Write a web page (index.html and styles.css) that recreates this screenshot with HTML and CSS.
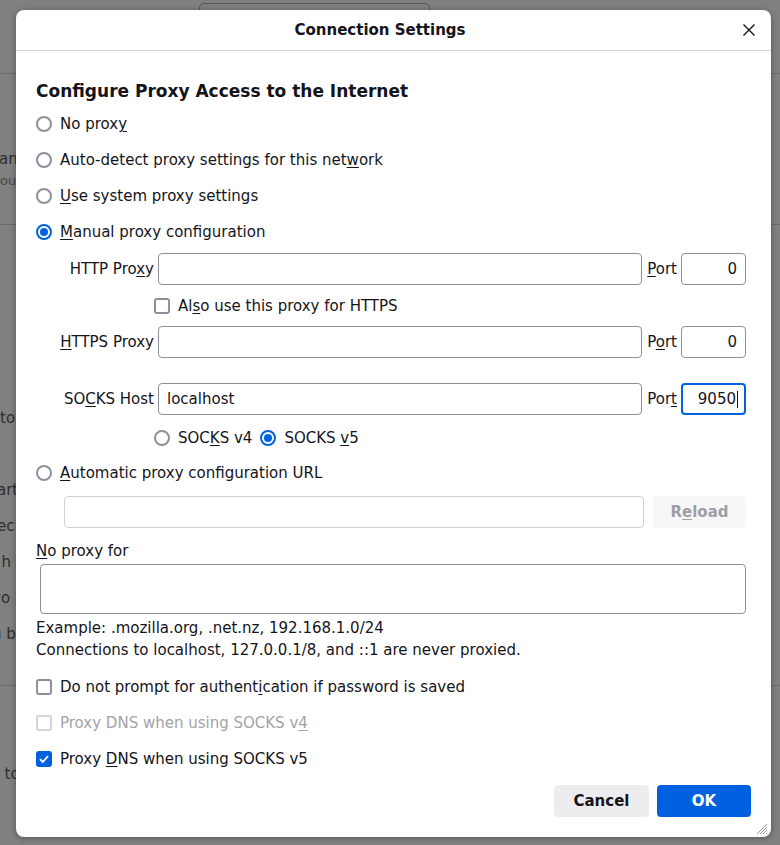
FILE: index.html
```html
<!DOCTYPE html>
<html>
<head>
<meta charset="utf-8">
<link rel="stylesheet" href="styles.css">
</head>
<body>
<div class="backdrop">
  <div class="bd-box"></div>
  <div class="bd-line bd-l1"></div>
  <div class="bd-text bd-t1">an</div>
  <div class="bd-text bd-small">ou</div>
  <div class="bd-line bd-l2"></div>
  <div class="bd-text bd-t3">to</div>
  <div class="bd-text bd-t4">art</div>
  <div class="bd-text bd-t5">ec</div>
  <div class="bd-text bd-t5">. h</div>
  <div class="bd-text bd-t5">yo</div>
  <div class="bd-text bd-t5">u b</div>
  <div class="bd-line bd-l3"></div>
  <div class="bd-text bd-t6">s to</div>
</div>

<div class="dialog">
  <div class="dlg-head">
    <h1 class="dlg-title">Connection Settings</h1>
    <span class="close-btn">
      <svg width="14" height="14" viewBox="0 0 14 14"><path d="M1.5 1.5 L12.5 12.5 M12.5 1.5 L1.5 12.5" stroke="#15141a" stroke-width="1.4" fill="none"/></svg>
    </span>
  </div>

  <div class="dlg-body">
    <h2 class="section-title">Configure Proxy Access to the Internet</h2>

    <div class="opt-row"><span class="radio"></span><span>No prox<u>y</u></span></div>
    <div class="opt-row"><span class="radio"></span><span>Auto-detect proxy settings for this net<u>w</u>ork</span></div>
    <div class="opt-row"><span class="radio"></span><span><u>U</u>se system proxy settings</span></div>
    <div class="opt-row"><span class="radio checked"></span><span><u>M</u>anual proxy configuration</span></div>

    <div class="manual">
      <span class="flabel">HTTP Pro<u>x</u>y</span>
      <div class="field"></div>
      <span class="plabel"><u>P</u>ort</span>
      <div class="field port">0</div>

      <div class="sub-row check-row"><span class="check"></span><span>Al<u>s</u>o use this proxy for HTTPS</span></div>

      <span class="flabel"><u>H</u>TTPS Proxy</span>
      <div class="field"></div>
      <span class="plabel">P<u>o</u>rt</span>
      <div class="field port">0</div>

      <div class="spacer"></div>

      <span class="flabel">SO<u>C</u>KS Host</span>
      <div class="field text">localhost</div>
      <span class="plabel">Por<u>t</u></span>
      <div class="field port focus">9050<span class="caret"></span></div>

      <div class="sub-row socks-row">
        <span class="radio"></span><span>SOC<u>K</u>S v4</span>
        <span class="radio checked"></span><span>SOCKS <u>v</u>5</span>
      </div>
    </div>

    <div class="opt-row auto-row"><span class="radio"></span><span><u>A</u>utomatic proxy configuration URL</span></div>
    <div class="url-row">
      <div class="field disabled"></div>
      <span class="reload">R<u>e</u>load</span>
    </div>

    <div class="np-label"><u>N</u>o proxy for</div>
    <div class="textarea"></div>
    <div class="hint">Example: .mozilla.org, .net.nz, 192.168.1.0/24</div>
    <div class="hint">Connections to localhost, 127.0.0.1/8, and ::1 are never proxied.</div>

    <div class="checks">
      <div class="opt-row"><span class="check"></span><span>Do not prompt for authent<u>i</u>cation if password is saved</span></div>
      <div class="opt-row disabled-row"><span class="check dis"></span><span>Proxy DNS when using SOCKS v<u>4</u></span></div>
      <div class="opt-row"><span class="check on"><svg width="12" height="12" viewBox="0 0 12 12"><path d="M2 6.2 L4.8 9 L10 3.2" stroke="#fff" stroke-width="1.8" fill="none"/></svg></span><span>Proxy <u>D</u>NS when using SOCKS v5</span></div>
    </div>

    <div class="buttons">
      <span class="btn cancel">Cancel</span>
      <span class="btn ok">OK</span>
    </div>
  </div>
  <svg class="grip" width="12" height="12" viewBox="0 0 12 12"><path d="M11 1 L1 11 M11 4 L4 11 M11 7 L7 11 M11 10 L10 11" stroke="#9a9a9a" stroke-width="1" fill="none"/></svg>
</div>
</body>
</html>
```

FILE: styles.css
```css
* { box-sizing: border-box; }
html, body { margin: 0; padding: 0; }
body {
  width: 780px;
  height: 845px;
  overflow: hidden;
  position: relative;
  background: #808080;
  font-family: "DejaVu Sans", sans-serif;
  font-size: 15px;
  color: #15141a;
}
u { text-decoration: underline; text-underline-offset: 2px; text-decoration-thickness: 1px; }

/* backdrop page under the modal overlay */
.backdrop {
  position: absolute;
  inset: 0;
  display: flex;
  flex-direction: column;
  color: #2e2e2e;
}
.bd-box {
  margin: 3px 0 0 199px;
  width: 231px;
  height: 40px;
  border: 1px solid #555;
  border-radius: 5px;
}
.bd-line { height: 1px; background: #6c6c6c; }
.bd-l1 { margin-top: 30px; }
.bd-text { line-height: 22px; height: 22px; margin-left: 0; }
.bd-t1 { margin-top: 74px; margin-left: -1px; }
.bd-small { font-size: 13px; height: 22px; color: #484848; }
.bd-l2 { margin-top: 32px; }
.bd-t3 { margin-top: 182px; }
.bd-t4 { margin-top: 50px; margin-left: -3px; }
.bd-t5 { margin-top: 14px; margin-left: -3px; }
.bd-t5 + .bd-t5 { margin-left: -8px; }
.bd-l3 { margin-top: 40px; }
.bd-t6 { margin-top: 77px; margin-left: -8px; }

/* dialog */
.dialog {
  position: absolute;
  left: 16px;
  top: 10px;
  width: 755px;
  height: 827px;
  background: #fff;
  border-radius: 8px;
  box-shadow: 0 1px 6px rgba(0,0,0,0.35);
}
.dlg-head {
  height: 41px;
  border-bottom: 1px solid #d4d4d8;
  display: flex;
  align-items: center;
  justify-content: center;
  padding-right: 27px;
  position: relative;
}
.dlg-title {
  margin: 0;
  font-size: 15px;
  font-weight: bold;
  line-height: 40px;
}
.close-btn {
  position: absolute;
  right: 15px;
  top: 13px;
  width: 14px;
  height: 14px;
  display: flex;
}
.dlg-body {
  padding: 29px 25px 0 20px;
  display: flex;
  flex-direction: column;
}
.section-title {
  margin: 0;
  font-size: 17px;
  font-weight: bold;
  line-height: 22px;
}
.opt-row {
  height: 36px;
  display: flex;
  align-items: center;
  gap: 8px;
  white-space: nowrap;
}
.section-title + .opt-row { margin-top: 4px; }

.radio {
  width: 16px;
  height: 16px;
  border: 2px solid #8f8f9d;
  border-radius: 50%;
  flex: none;
  background: #fff;
  position: relative;
}
.radio.checked { border-color: #0061e0; }
.radio.checked::after {
  content: "";
  position: absolute;
  left: 2px;
  top: 2px;
  width: 8px;
  height: 8px;
  border-radius: 50%;
  background: #0061e0;
}
.check {
  width: 16px;
  height: 16px;
  border: 2px solid #8f8f9d;
  border-radius: 3px;
  flex: none;
  background: #fff;
  display: flex;
  align-items: center;
  justify-content: center;
}
.check.dis { border-color: #d4d4d8; }
.check.on { background: #0061e0; border-color: #0061e0; }

/* manual proxy grid */
.manual {
  margin-top: 3px;
  display: grid;
  grid-template-columns: 118px 1fr auto 65px;
  grid-template-rows: 32px 41px 32px 25px 32px 45px;
  column-gap: 4px;
  align-items: center;
}
.flabel { text-align: right; white-space: nowrap; }
.plabel { padding-left: 1px; }
.field {
  height: 32px;
  border: 1px solid #8f8f9d;
  border-radius: 4px;
  background: #fff;
  display: flex;
  align-items: center;
  padding: 0 8px;
  white-space: nowrap;
}
.field.port { justify-content: flex-end; }
.field.focus { border: 2px solid #0061e0; padding-right: 6px; }
.caret { width: 1px; height: 17px; background: #15141a; margin-left: 1px; }
.field.disabled { border-color: #cfcfd8; }
.sub-row {
  grid-column: 2 / 5;
  margin-left: -4px;
  display: flex;
  align-items: center;
  gap: 8px;
  white-space: nowrap;
}
.spacer { grid-column: 1 / 5; }

.auto-row { height: 26px; }
.url-row {
  margin: 10px 0 0 28px;
  display: flex;
  gap: 9px;
}
.url-row .field { flex: 1; }
.reload {
  width: 93px;
  height: 32px;
  border-radius: 4px;
  background: #f7f7f9;
  color: #9f9fa6;
  font-weight: bold;
  display: flex;
  align-items: center;
  justify-content: center;
}
.np-label { margin-top: 12px; line-height: 22px; }
.textarea {
  margin: 2px 0 0 4px;
  height: 50px;
  border: 1px solid #8f8f9d;
  border-radius: 4px;
}
.hint { line-height: 22px; }
.textarea + .hint { margin-top: 3px; }
.checks { margin-top: 8px; }
.disabled-row { color: #a3a3a8; }

.buttons {
  margin: 8px -5px 0 0;
  display: flex;
  justify-content: flex-end;
  gap: 8px;
}
.btn {
  height: 32px;
  border-radius: 4px;
  font-weight: bold;
  display: flex;
  align-items: center;
  justify-content: center;
}
.cancel { width: 95px; background: #ededf0; color: #15141a; }
.ok { width: 94px; background: #0061e0; color: #fff; }

.grip { position: absolute; right: 3px; bottom: 2px; }
```
